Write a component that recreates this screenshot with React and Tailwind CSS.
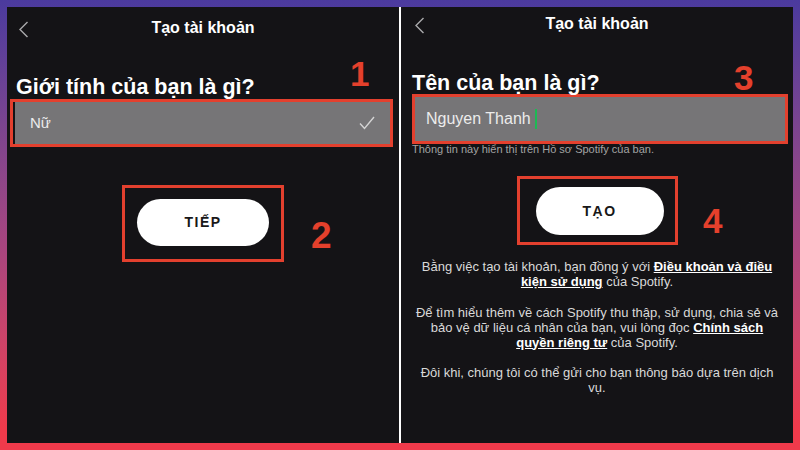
import React from "react";

const font = { fontFamily: '"Liberation Sans", Arial, sans-serif' };

function Chevron() {
  return (
    <svg width="11" height="17" viewBox="0 0 11 17" fill="none">
      <path d="M9.5 1 L2 8.5 L9.5 16" stroke="#a9a9ab" strokeWidth="1.4" />
    </svg>
  );
}

function Header({ tall }) {
  return (
    <div
      className={`grid grid-cols-[40px_1fr_40px] items-center ${tall ? "h-[42px]" : "h-[34px]"}`}
    >
      <div className={tall ? "pl-[11px] pt-[2px]" : "pl-[13px] pt-[2px]"}>
        <Chevron />
      </div>
      <div className="text-center text-[16px] font-bold text-white">Tạo tài khoản</div>
      <div />
    </div>
  );
}

function Mark({ n, className }) {
  return (
    <div className={`absolute text-[35px] font-bold leading-none text-[#e4402c] ${className}`}>
      {n}
    </div>
  );
}

function GenderScreen() {
  return (
    <div className="relative h-full w-[392px] bg-[#141316]">
      <Header tall />
      <Mark n="1" className="left-[343px] top-[49px]" />
      <h1 className="mt-[25px] pl-[9px] text-[21.5px] font-bold leading-[26px] text-white">
        Giới tính của bạn là gì?
      </h1>
      <div className="ml-[3px] mr-[6px] mt-[-1px] border-[3px] border-[#e3402e] bg-[#141316] pl-[2px]">
        <div className="flex h-[42px] items-center justify-between bg-[#767577] pl-[15px] pr-[15px]">
          <span className="text-[15px] text-[#ececec]">Nữ</span>
          <svg width="16" height="14" viewBox="0 0 16 14" fill="none">
            <path d="M1 7.5 L5.5 12.5 L15 1" stroke="#d4d4d4" strokeWidth="1.4" />
          </svg>
        </div>
      </div>
      <div className="relative mt-[38px] flex justify-center">
        <div className="border-[3px] border-[#e3402e] px-[12px] pb-[13px] pt-[11px]">
          <div className="flex h-[47px] w-[132px] items-center justify-center rounded-full bg-white text-[14px] font-bold tracking-[1.5px] text-[#181818]">
            TIẾP
          </div>
        </div>
        <Mark n="2" className="left-[304px] top-[32px] text-[37px]" />
      </div>
    </div>
  );
}

function NameScreen() {
  return (
    <div className="relative h-full w-[392px] bg-[#141316]">
      <Header />
      <Mark n="3" className="left-[333px] top-[53px]" />
      <h1 className="mt-[29px] pl-[11px] text-[21.5px] font-bold leading-[26px] text-white">
        Tên của bạn là gì?
      </h1>
      <div className="ml-[11px] mr-[5px] mt-[-2px] border-[3px] border-[#e3402e]">
        <div className="flex h-[44px] items-center bg-[#767577] pl-[11px]">
          <span className="text-[16px] text-[#ececec]">Nguyen Thanh</span>
          <span className="ml-[4px] h-[20px] w-[2px] bg-[#1db954]" />
        </div>
      </div>
      <p className="mt-[-1px] pl-[11px] text-[11px] leading-[13px] text-[#a3a3a3]">
        Thông tin này hiển thị trên Hồ sơ Spotify của bạn.
      </p>
      <div className="relative mt-[20px] flex justify-center">
        <div className="border-[3px] border-[#e3402e] pb-[7px] pl-[16px] pr-[11px] pt-[8px]">
          <div className="flex h-[48px] w-[128px] items-center justify-center rounded-full bg-white text-[14px] font-bold tracking-[1.5px] text-[#181818]">
            TẠO
          </div>
        </div>
        <Mark n="4" className="left-[302px] top-[27px]" />
      </div>
      <div className="mx-auto mt-[14px] w-[370px] space-y-[15.5px] text-center text-[13px] leading-[15px] text-[#d9d9d9]">
        <p>
          Bằng việc tạo tài khoản, bạn đồng ý với{" "}
          <span className="font-bold text-white underline">Điều khoản và điều kiện sử dụng</span>{" "}
          của Spotify.
        </p>
        <p>
          Để tìm hiểu thêm về cách Spotify thu thập, sử dụng, chia sẻ và bảo vệ dữ liệu cá nhân
          của bạn, vui lòng đọc{" "}
          <span className="font-bold text-white underline">Chính sách quyền riêng tư</span> của
          Spotify.
        </p>
        <p>Đôi khi, chúng tôi có thể gửi cho bạn thông báo dựa trên dịch vụ.</p>
      </div>
    </div>
  );
}

export default function App() {
  return (
    <div
      style={font}
      className="flex h-[450px] w-[800px] bg-gradient-to-b from-[#4b3a9e] via-[#a9457f] via-55% to-[#ef3a4b] to-95% p-[7px]"
    >
      <GenderScreen />
      <div className="w-[2px] bg-white" />
      <NameScreen />
    </div>
  );
}
